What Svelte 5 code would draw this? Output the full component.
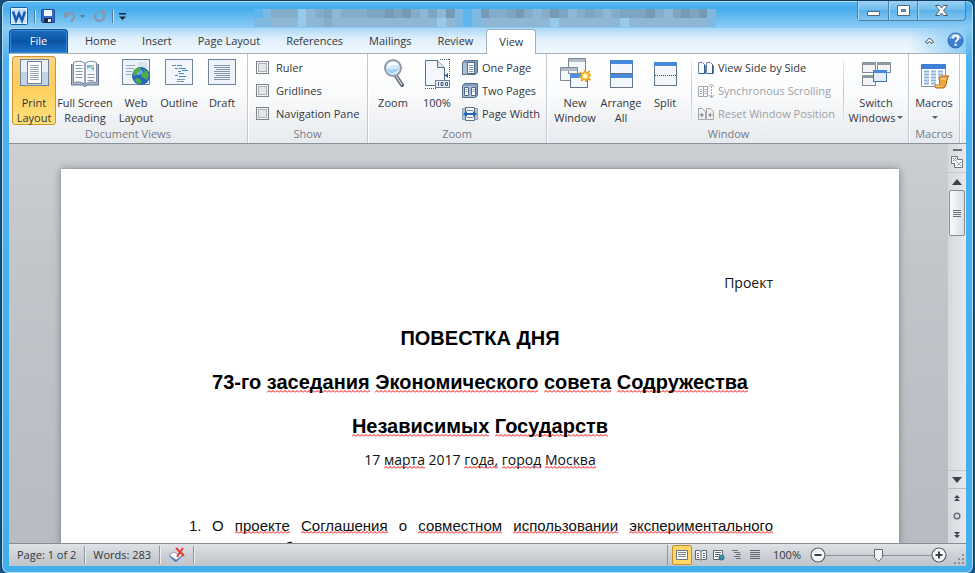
<script>
  const tabs = ['Home', 'Insert', 'Page Layout', 'References', 'Mailings', 'Review', 'View'];
  const palette = { a: '#5fb6ec', b: '#80b9df', c: '#83adc9', d: '#97c9ea', e: '#8db7d4', f: '#769ab4', g: '#7ca5c1' };
  const mosaic = [
    'abcccdecgecccggfgfcegefbabfccgfcecfgecgcecgggfcegfgfb',
    'bbeeedeeceeeeeeeeeeeedebabeeeeeeeedeeeeeeedeeeeeeeeeb'
  ];
  let activeTab = $state('View');
  let zoom = $state(100);
  let show = $state({ Ruler: false, Gridlines: false, 'Navigation Pane': false });
</script>

{#snippet icon(name)}
  {#if name === 'print'}
    <svg width="32" height="32" viewBox="0 0 32 32" shape-rendering="crispEdges">
      <rect x="2.500" y="2.500" width="28" height="26" fill="#e8eff6" stroke="#71839b" />
      <path d="M3 15h27v13H3z" fill="#c3d3e4" />
      <rect x="9.500" y="4.500" width="14" height="22" fill="#fff" stroke="#6d7f97" />
      <path d="M12 8.500h9M12 10.500h9M12 12.500h9M12 14.500h9M12 16.500h9M12 18.500h9M12 20.500h9M12 22.500h9" stroke="#9aa9bb" />
    </svg>
  {:else if name === 'read'}
    <svg width="32" height="32" viewBox="0 0 32 32">
      <path d="M2.500 7v21h11l2.500 1.500 2.500-1.500h11V7" fill="#a9b8ca" stroke="#62738b" />
      <path d="M4.500 5.500Q11 2.500 16 6.500V27Q11 23.500 4.500 25.500zM27.500 5.500Q21 2.500 16 6.500V27Q21 23.500 27.500 25.500z" fill="#f9fbfd" stroke="#7888a0" />
      <path d="M6.500 8.500h7M6.500 11.500h7M6.500 14.500h7M6.500 17.500h7M6.500 20.500h7M18.500 17.500h7M18.500 20.500h7M18.500 23.500h6" stroke="#8796aa" />
      <path d="M18 8h7v7h-7z" fill="#6bb2ea" /><path d="M18 15v-3l3-2 4 4v1z" fill="#e6f2fb" /><circle cx="23.500" cy="9.500" r="1.200" fill="#ffd566" />
    </svg>
  {:else if name === 'web'}
    <svg width="32" height="32" viewBox="0 0 32 32">
      <rect x="2.500" y="2.500" width="27" height="25" fill="#edf3fa" stroke="#71839b" />
      <path d="M6 8.500h9M6 11.500h8M6 14.500h6M6 17.500h5M18 8.500h5" stroke="#93a9c0" /><path d="M18 5h9v6h-9z" fill="#d7e3ef" />
      <circle cx="21" cy="19" r="9" fill="#2768b6" /><ellipse cx="18" cy="15" rx="5" ry="3" fill="#8dc5ee" opacity=".7" />
      <path d="M14 13q4-4 7-2l-1 3-3 1-1 4-3-1zM23 12l4 2 2 4-2 5-3-2-3-1 1-4 3-1zM16 21l4 1 2 3-3 2-4-3z" fill="#4cae45" />
    </svg>
  {:else if name === 'outline'}
    <svg width="32" height="32" viewBox="0 0 32 32" shape-rendering="crispEdges">
      <rect x="2.500" y="2.500" width="27" height="25" fill="#f2f6fb" stroke="#71839b" />
      <path d="M9 8.500h4M12 11.500h3M15 14.500h3M12 18.500h3" stroke="#71839b" />
      <path d="M14 8.500h5M16 11.500h7M19 13.500h6M16 16.500h5M16 19.500h7" stroke="#3c8ad0" />
      <path d="M14 22.500h8M14 24.500h7" stroke="#8296ae" />
    </svg>
  {:else if name === 'draft'}
    <svg width="32" height="32" viewBox="0 0 32 32" shape-rendering="crispEdges">
      <rect x="2.500" y="2.500" width="27" height="25" fill="#edf3f9" stroke="#71839b" />
      <path d="M8 8.500h16M8 10.500h16M10 12.500h14M8 14.500h16M8 16.500h16M10 18.500h14M8 20.500h16M8 22.500h16" stroke="#8496ad" />
    </svg>
  {:else if name === 'zoom'}
    <svg width="32" height="32" viewBox="0 0 32 32">
      <path d="M19 19l6 9" stroke="#555d68" stroke-width="4" stroke-linecap="round" /><path d="M19 19l6 9" stroke="#c5cad0" stroke-width="1.500" />
      <circle cx="16" cy="11" r="8" fill="#d5ebfb" stroke="#929ba7" stroke-width="2" />
      <path d="M10 11q0-6 6-6 4 0 5 3-7-1-11 3z" fill="#fff" /><path d="M10 14q5 5 11-1l1-2q-5 2-12 1z" fill="#a2d0f3" />
    </svg>
  {:else if name === 'hundred'}
    <svg width="32" height="32" viewBox="0 0 32 32">
      <path d="M19 2.500h10M28.500 2v19M4 31.500h11" stroke="#42566f" stroke-dasharray="1 1" />
      <path d="M4.500 3.500h12l7 7v18h-19z" fill="#f4f8fc" stroke="#54708f" /><path d="M16.500 3.500v7h7" fill="#dbe6f1" stroke="#54708f" />
      <path d="M23 18.500h4" stroke="#2d587c" /><path d="M27 16v5l-3-2.500z" fill="#2d587c" />
      <rect x="14.500" y="23.500" width="14" height="7" fill="#edf3f9" stroke="#6a829c" />
      <path d="M17.500 25v4M20 25.500h2v3h-2zM24.500 25.500h2v3h-2z" fill="none" stroke="#40566f" />
    </svg>
  {:else if name === 'newwin'}
    <svg width="32" height="32" viewBox="0 0 32 32">
      <path d="M9.500 1.500h17v15h-17zM1.500 10.500h17v13h-17z" fill="#f4f7fa" stroke="#7b8897" /><path d="M10 2h16v3H10zM2 11h16v3H2z" fill="#b3bcc6" />
      <rect x="11.500" y="17.500" width="17" height="13" fill="#f5f9fd" stroke="#64748a" /><path d="M11 17h18v4H11z" fill="#4e91e0" />
      <path d="M26 13l1.500 3 3-2-1 3.500 3 .5-3 2 2 3-3.500-1-1 3-1.500-3-3 2 .5-3-3-1 3-1.500-2-3 3.500 1z" fill="#ffce40" stroke="#e0971c" /><circle cx="26" cy="19" r="2.200" fill="#fff9cf" />
    </svg>
  {:else if name === 'arrange'}
    <svg width="32" height="32" viewBox="0 0 32 32" shape-rendering="crispEdges">
      <path d="M5.500 3.500h22v13h-22zM5.500 17.500h22v13h-22z" fill="#f3f7fb" stroke="#64748a" /><path d="M5 3h23v4H5zM5 17h23v4H5z" fill="#4789dd" />
    </svg>
  {:else if name === 'split'}
    <svg width="32" height="32" viewBox="0 0 32 32" shape-rendering="crispEdges">
      <rect x="5.500" y="5.500" width="22" height="23" fill="#f3f7fb" stroke="#64748a" /><path d="M5 5h23v4H5z" fill="#4789dd" /><path d="M6 18.500h22" stroke="#37475b" stroke-dasharray="1 1" />
    </svg>
  {:else if name === 'switch'}
    <svg width="32" height="32" viewBox="0 0 32 32" shape-rendering="crispEdges">
      <path d="M2.500 5.500h13v10h-13zM17.500 5.500h13v10h-13zM2.500 18.500h13v10h-13z" fill="#f2f4f7" stroke="#7f8790" /><path d="M2 5h14v3H2zM17 5h14v3H17zM2 18h14v3H2z" fill="#8f979f" />
      <rect x="13.500" y="13.500" width="13" height="11" fill="#e4eefa" stroke="#466fa6" /><path d="M13 13h14v3H13z" fill="#4789dd" />
    </svg>
  {:else if name === 'macros'}
    <svg width="32" height="32" viewBox="0 0 32 32">
      <rect x="3.500" y="7.500" width="24" height="22" fill="#fff" stroke="#8093aa" /><path d="M3 7h25v5H3z" fill="#3f7fd8" />
      <path d="M6 14.500h5M13 14.500h5M20 14.500h5M6 17.500h5M13 17.500h5M20 17.500h5M6 20.500h5M13 20.500h5M20 20.500h4M6 23.500h5M13 23.500h5M6 26.500h5M13 26.500h5" stroke="#91b1dd" stroke-width="2" />
      <path d="M21 21q1-2 3-2h7q-2 2-2 4l-1 5q-1 3-3 3h-7q-2-1-1-3h5z" fill="#eda63c" stroke="#a9671a" /><path d="M23 22h5M17.500 29h6" stroke="#ffe09a" />
    </svg>
  {:else if name === 'onepage' || name === 'twopages'}
    <svg width="16" height="16" viewBox="0 0 16 16">
      <path d="M2.500.500h13v12l-2 2h-13v-12z" fill="#7f9bb9" stroke="#54708e" /><path d="M1 3h12v11H1z" fill="#a9c0d9" />
      {#if name === 'onepage'}<path d="M5.500 2.500h7v11h-7z" fill="#fff" stroke="#506a88" /><path d="M7 5.500h4M7 7.500h4M7 9.500h4M7 11.500h4" stroke="#7f96b0" />
      {:else}<path d="M2.500 4.500h4v8h-4zM9.500 4.500h4v8h-4z" fill="#fff" stroke="#506a88" /><path d="M3.500 6.500h2M3.500 8.500h2M10.500 6.500h2M10.500 8.500h2" stroke="#7f96b0" />{/if}
    </svg>
  {:else if name === 'pagewidth'}
    <svg width="16" height="16" viewBox="0 0 16 16">
      <path d="M.500 2.500h15v11H.500z" fill="#b3c1d0" stroke="#8fa2b7" /><path d="M3.500 1.500h9v13h-9z" fill="#fff" stroke="#5b6f86" />
      <path d="M5 4.500h6M5 11.500h6" stroke="#6c8098" /><path d="M4 8h8" stroke="#1d64bb" stroke-width="2" /><path d="M1 8l4-3v6zM15 8l-4-3v6z" fill="#1d64bb" />
    </svg>
  {:else if name === 'side'}
    <svg width="16" height="16" viewBox="0 0 16 16">
      <path d="M.500 2.500h4l3 3v8h-7zM8.500 2.500h4l3 3v8h-7z" fill="#f6faff" stroke="#6a829e" /><path d="M6.500 5v8.500H1M14.500 5v8.500H9" fill="none" stroke="#315d8b" />
    </svg>
  {:else if name === 'sync'}
    <svg width="16" height="16" viewBox="0 0 16 16" fill="none" stroke="#a4a7ab">
      <path d="M.500 3.500h5v10h-5zM5.500 3.500h4v10h-4M2 6.500h2M2 8.500h2M2 10.500h2M6.500 6.500h2M6.500 8.500h2M6.500 10.500h2" /><path d="M13.500 3v11" stroke-dasharray="2 1" /><path d="M11 4l2.500-3 2.500 3M11 12l2.500 3 2.500-3" />
    </svg>
  {:else if name === 'reset'}
    <svg width="16" height="16" viewBox="0 0 16 16" fill="#eef0f2" stroke="#a4a7ab">
      <path d="M.500 2.500h4l3 3v8h-7zM8.500 2.500h4l3 3v8h-7z" /><path d="M1 9h3M12 9h3" /><path d="M3 6.500L6 9l-3 2.500zM13 6.500L10 9l3 2.500z" fill="#8f9296" stroke="none" />
    </svg>
  {/if}
{/snippet}

{#snippet big(name, lines, cls = '', drop = false)}
  <button class="big {cls}">
    {@render icon(name)}
    {#each lines as line, i}
      <span>{line}{#if drop && i === lines.length - 1}<i class="caret"></i>{/if}</span>
    {/each}
  </button>
{/snippet}

{#snippet small(name, text, disabled = false)}
  <button class="small" {disabled}>{@render icon(name)}<span>{text}</span></button>
{/snippet}

<div class="window">
  <header class="titlebar">
    <div class="quick">
      <svg width="18" height="18" viewBox="0 0 18 18" role="img" aria-label="Word">
        <rect x=".5" y=".5" width="17" height="17" rx="1" fill="#e8f3fc" stroke="#1f5ba3" /><rect x="2" y="2" width="14" height="14" fill="#c4e2f7" />
        <path d="M3 4.500l3 9 3-7 3 7 3-9" fill="none" stroke="#1a5cb0" stroke-width="2.500" />
      </svg>
      <i class="bar"></i>
      <button aria-label="Save">
        <svg width="14" height="14" viewBox="0 0 14 14"><path d="M.500 1.500q0-1 1-1h11q1 0 1 1v12h-12l-1-1z" fill="#3569c4" stroke="#24458f" /><path d="M3 1h8v6H3z" fill="#eef5fd" /><path d="M3 9h8v5H3z" fill="#1e2c4b" /><path d="M7 10h3v3H7z" fill="#e8edf5" /></svg>
      </button>
      <button aria-label="Undo" class="undo">
        <svg width="13" height="13" viewBox="0 0 13 13"><path d="M3 5.500q5-4 7.500-1 2 3-2.500 7.500" fill="none" stroke="#8598ae" stroke-width="2.200" /><path d="M0 1l1 7 6-2z" fill="#8598ae" /></svg>
        <svg width="5" height="3" viewBox="0 0 5 3"><path d="M0 0h5L2.500 3z" fill="#58799c" /></svg>
      </button>
      <button aria-label="Redo">
        <svg width="13" height="13" viewBox="0 0 13 13"><path d="M4 2.500Q0 6 3 9.500q4 3 7.500-.5 2-3 0-5.500" fill="none" stroke="#8598ae" stroke-width="2.200" /><path d="M6 0h6v6z" fill="#8598ae" /></svg>
      </button>
      <i class="bar"></i>
      <button aria-label="Customize Quick Access Toolbar">
        <svg width="7" height="7" viewBox="0 0 7 7"><path d="M0 0h7v1.500H0zM0 3.500h7L3.500 7z" fill="#17283c" /></svg>
      </button>
    </div>
    <div class="mosaic" aria-hidden="true">
      {#each mosaic as row}
        <div>{#each row as c}<i style="background: {palette[c]}"></i>{/each}</div>
      {/each}
    </div>
    <div class="controls">
      <button aria-label="Minimize" class="min"><svg width="13" height="5" viewBox="0 0 13 5"><path d="M.500.500h12v4H.500z" fill="#fff" stroke="#55667c" /></svg></button>
      <button aria-label="Restore" class="max"><svg width="13" height="11" viewBox="0 0 13 11"><path d="M.500.500h12v10H.500zM4.500 4.500v2h4v-2z" fill="#fff" fill-rule="evenodd" stroke="#55667c" /></svg></button>
      <button aria-label="Close" class="close"><svg width="13" height="11" viewBox="0 0 13 11"><path d="M.500.500h4l2 2.500 2-2.500h4L8.500 5.500l4 5h-4l-2-2.500-2 2.500h-4l4-5z" fill="#fff" stroke="#4b5a6e" /></svg></button>
    </div>
  </header>

  <nav class="tabs">
    <button class="file">File</button>
    {#each tabs as t}
      <button class="tab" class:active={activeTab === t} onclick={() => (activeTab = t)}>{t}</button>
    {/each}
    <div class="help">
      <button aria-label="Minimize the Ribbon"><svg width="9" height="7" viewBox="0 0 9 7"><path d="M.500 5L4.500 1l4 4-1.500 1.500-2.500-2-2.500 2z" fill="#fff" stroke="#2f3a48" /></svg></button>
      <button aria-label="Help"><svg width="17" height="17" viewBox="0 0 17 17"><circle cx="8.500" cy="8.500" r="7.500" fill="#3a7fd3" stroke="#2b62ad" /><path d="M2 7q1-5 6.500-5.500Q14 2 15 7q-6-2-13 0z" fill="#7db2ea" /><path d="M5.800 6.500q0-3 2.800-3t2.800 2.500q0 1.500-1.500 2.300-1.200.7-1.200 2" fill="none" stroke="#fff" stroke-width="1.900" /><circle cx="8.600" cy="12.700" r="1.200" fill="#fff" /></svg></button>
    </div>
  </nav>

  <section class="ribbon">
    <div class="group doc-views">
      <div class="items">
        {@render big('print', ['Print', 'Layout'], 'on')}
        {@render big('read', ['Full Screen', 'Reading'], 'wide')}
        {@render big('web', ['Web', 'Layout'])}
        {@render big('outline', ['Outline'], 'slim')}
        {@render big('draft', ['Draft'])}
      </div>
      <h2>Document Views</h2>
    </div>
    <div class="group show">
      <div class="items">
        <div class="col">
          {#each Object.keys(show) as name}
            <label class="check"><input type="checkbox" bind:checked={show[name]} /><span>{name}</span></label>
          {/each}
        </div>
      </div>
      <h2>Show</h2>
    </div>
    <div class="group zooming">
      <div class="items">
        {@render big('zoom', ['Zoom'])}
        {@render big('hundred', ['100%'])}
        <div class="col">
          {@render small('onepage', 'One Page')}
          {@render small('twopages', 'Two Pages')}
          {@render small('pagewidth', 'Page Width')}
        </div>
      </div>
      <h2>Zoom</h2>
    </div>
    <div class="group windows">
      <div class="items">
        {@render big('newwin', ['New', 'Window'], 'mid')}
        {@render big('arrange', ['Arrange', 'All'], 'mid')}
        {@render big('split', ['Split'], 'slim')}
        <i class="rule"></i>
        <div class="col">
          {@render small('side', 'View Side by Side')}
          {@render small('sync', 'Synchronous Scrolling', true)}
          {@render small('reset', 'Reset Window Position', true)}
        </div>
        <i class="rule last"></i>
        {@render big('switch', ['Switch', 'Windows'], 'wide', true)}
      </div>
      <h2>Window</h2>
    </div>
    <div class="group">
      <div class="items">{@render big('macros', ['Macros', ''], '', true)}</div>
      <h2>Macros</h2>
    </div>
  </section>

  <div class="workspace">
    <main class="canvas">
      <article class="page">
        <p class="draft-mark">Проект</p>
        <h1>ПОВЕСТКА ДНЯ<br />73-го <u>заседания</u> <u>Экономического</u> <u>совета</u> <u>Содружества</u><br /><u>Независимых</u> <u>Государств</u></h1>
        <p class="date">17 <u>марта</u> 2017 <u>года,</u> <u>город</u> <u>Москва</u></p>
        <ol>
          <li>
            <span class="num">1.</span>
            <div>
              <p>О <u>проекте</u> <u>Соглашения</u> о <u>совместном</u> <u>использовании</u> <u>экспериментального</u></p>
              <p class="rest">оборудования</p>
            </div>
          </li>
        </ol>
      </article>
    </main>
    <aside class="scroll">
      <i class="splitter"></i>
      <button aria-label="View Ruler" class="ruler"><svg width="12" height="12" viewBox="0 0 12 12"><path d="M.500.500h6v3h5v8h-8v-4h-3z" fill="#f6f7f9" stroke="#70757c" /><path d="M2 2l8 8M5 2L2 5M10 6l-4 4" stroke="#70757c" stroke-dasharray="2 1" /></svg></button>
      <button aria-label="Scroll up" class="arrow"><svg width="10" height="6" viewBox="0 0 10 6"><path d="M0 6h10L5 0z" fill="#3d4249" /></svg></button>
      <div class="track"><button aria-label="Scroll position" class="thumb"><i></i><i></i><i></i><i></i></button></div>
      <button aria-label="Scroll down" class="arrow"><svg width="10" height="6" viewBox="0 0 10 6"><path d="M0 0h10L5 6z" fill="#3d4249" /></svg></button>
      <div class="browse">
        <button aria-label="Previous Page"><svg width="6" height="7" viewBox="0 0 6 7"><path d="M3 0l3 3H0zM3 3l3 3H0z" fill="#3d4249" /></svg></button>
        <button aria-label="Select Browse Object"><svg width="8" height="8" viewBox="0 0 8 8"><circle cx="4" cy="4" r="2.800" fill="none" stroke="#6a7078" stroke-width="1.500" /></svg></button>
        <button aria-label="Next Page"><svg width="6" height="7" viewBox="0 0 6 7"><path d="M0 1h6L3 4zM0 4h6L3 7z" fill="#3d4249" /></svg></button>
      </div>
    </aside>
  </div>

  <footer class="status">
    <button class="cell">Page: 1 of 2</button>
    <button class="cell">Words: 283</button>
    <button class="cell" aria-label="Proofing errors">
      <svg width="17" height="16" viewBox="0 0 17 16"><path d="M1 9l6-3 2 2 4-3 3 3-8 7-2-1z" fill="#3f7fc6" /><path d="M1 8l5-3 3 2 4-2 3 2-8 6z" fill="#fff" stroke="#8b9db3" /><path d="M8 1l8 8M15 1L9 10" stroke="#ea3b2e" stroke-width="2" /></svg>
    </button>
    <div class="views">
      <button aria-label="Print Layout" class="on"><svg width="12" height="12" viewBox="0 0 12 12"><path d="M.500 1.500h11v9H.500z" fill="#fff" stroke="#6b7683" /><path d="M2 3.500h8M2 5.500h8M2 7.500h8" stroke="#7d8794" /></svg></button>
      <button aria-label="Full Screen Reading"><svg width="12" height="12" viewBox="0 0 12 12"><path d="M.500 1.500h4l1.500 1 1.500-1h4v9h-4L6 11l-1.500-.5h-4zM6 2v9" fill="#f5f6f8" stroke="#5f6770" /><path d="M2 4.500h2M2 6.500h2M2 8.500h2M8 4.500h2M8 6.500h2M8 8.500h2" stroke="#5f6770" /></svg></button>
      <button aria-label="Web Layout"><svg width="12" height="12" viewBox="0 0 12 12"><path d="M.500 1.500h9v9h-9z" fill="#fff" stroke="#5f6770" /><path d="M2 3.500h6M2 5.500h5M2 7.500h3" stroke="#5f6770" /><circle cx="8.500" cy="8.500" r="3" fill="#2f74b8" /><path d="M7 8l2-2 1 2-1 2z" fill="#4fae4b" /></svg></button>
      <button aria-label="Outline"><svg width="12" height="12" viewBox="0 0 12 12"><path d="M1 1.500h6M3 3.500h6M5 5.500h5M3 7.500h6M5 9.500h5" stroke="#6b7178" /></svg></button>
      <button aria-label="Draft"><svg width="12" height="12" viewBox="0 0 12 12"><path d="M1 1.500h10M1 3.500h10M1 5.500h10M1 7.500h10M1 9.500h10" stroke="#5f6770" /></svg></button>
    </div>
    <button class="percent">{zoom}%</button>
    <button aria-label="Zoom out" class="round" onclick={() => (zoom = Math.max(10, zoom - 10))}><svg width="16" height="16" viewBox="0 0 16 16"><circle cx="8" cy="8" r="7" fill="#f5f6f8" stroke="#5b626b" stroke-width="1.200" /><path d="M4.500 8h7" stroke="#3c4249" stroke-width="2" /></svg></button>
    <input type="range" min="10" max="190" bind:value={zoom} aria-label="Zoom level" />
    <button aria-label="Zoom in" class="round" onclick={() => (zoom = Math.min(190, zoom + 10))}><svg width="16" height="16" viewBox="0 0 16 16"><circle cx="8" cy="8" r="7" fill="#f5f6f8" stroke="#5b626b" stroke-width="1.200" /><path d="M4.500 8h7M8 4.500v7" stroke="#3c4249" stroke-width="2" /></svg></button>
    <svg class="grip" width="12" height="12" viewBox="0 0 12 12"><path d="M8 0h2v2H8zM4 4h2v2H4zM8 4h2v2H8zM0 8h2v2H0zM4 8h2v2H4zM8 8h2v2H8z" fill="#8c939b" /></svg>
  </footer>
</div>

<style>
  :global(body) { margin: 0; background: linear-gradient(90deg, #174f7c, #1b7199 50%, #14567f); }
  * { box-sizing: border-box; }
  button { border: 0; padding: 0; background: none; font: inherit; color: inherit; }
  svg, i { display: block; flex: none; }
  .window {
    height: 100vh; display: flex; flex-direction: column; margin: 0 1px; padding: 0 7px 7px;
    border: 1px solid #123c61; border-bottom: 0; border-radius: 7px;
    background: linear-gradient(#5cb9f2, #46adec 8px, #8acbf5 26px, #4db2ef 60px, #42aeec);
    box-shadow: inset 0 0 0 1px #b9dff5;
    font: 11px/14px "Open Sans", "Noto Sans", sans-serif; color: #33373d;
  }
  .titlebar { flex: none; height: 27px; display: flex; }
  .quick { display: flex; align-items: center; gap: 8px; padding: 3px 0 0 1px; }
  .quick .bar { width: 1px; height: 13px; margin: 0 -2px; background: #54799b; box-shadow: 1px 0 #c6e4f7; }
  .undo { display: flex; align-items: center; gap: 4px; }
  .mosaic { flex: 1; margin: 8px 141px 0 128px; }
  .mosaic div { display: flex; }
  .mosaic i { flex: 1; height: 9px; }
  .controls { display: flex; height: 20px; border: 1px solid #4d7ea6; border-top: 0; border-radius: 0 0 4px 4px; background: linear-gradient(#9bd0f2, #6bbbec 50%, #5bb1e8 50%, #84c8f2); }
  .controls button { display: flex; align-items: center; justify-content: center; box-shadow: inset 1px 0 #a9d8f5; }
  .controls button + button { border-left: 1px solid #4d7ea6; }
  .min { width: 30px; padding-top: 6px; }
  .max { width: 29px; }
  .close { width: 48px; }

  .tabs { flex: none; height: 26px; display: flex; align-items: stretch; background: linear-gradient(90deg, #b2dcf6, transparent 6%, transparent 94%, #8cccf4), linear-gradient(#a9d7f6, #dceefb 40%, #f4f9fd); border-bottom: 1px solid #a5afba; }
  .tabs .tab, .file { padding-bottom: 1px; }
  .file { width: 59px; margin: 1px 4px 0 0; color: #fff; border: 1px solid #0d4c94; border-bottom: 0; border-radius: 4px 4px 0 0; background: linear-gradient(#1b6dc0, #0b54a4 50%, #1c78cf); box-shadow: inset 0 0 0 1px #3a8ad6; }
  .tab { margin-top: 1px; padding: 0 12px; border: 1px solid transparent; border-bottom: 0; }
  .tab.active { margin-bottom: -1px; border-color: #a5afba; border-radius: 4px 4px 0 0; background: #fff; }
  .help { margin-left: auto; display: flex; align-items: center; gap: 13px; padding-right: 2px; }

  .ribbon { flex: none; display: flex; background: linear-gradient(#fff, #fbfcfd 40%, #e7eaee); border-bottom: 1px solid #8b9199; }
  .group { display: flex; flex-direction: column; padding: 2px 3px; border-right: 1px solid #c3c8ce; box-shadow: 1px 0 #fff; }
  .doc-views { width: 239px; }
  .show { width: 120px; }
  .zooming { width: 179px; }
  .windows { width: 362px; padding-left: 5px; }
  .items { display: flex; height: 69px; }
  h2 { margin: 2px 0 0; font: inherit; line-height: 14px; text-align: center; color: #757b84; }
  .big { width: 44px; display: flex; flex-direction: column; align-items: center; border: 1px solid transparent; border-radius: 3px; white-space: nowrap; }
  .big.slim { width: 42px; }
  .big.mid { width: 46px; }
  .big.wide { width: 58px; }
  .big svg { margin-bottom: 6px; }
  .big span { display: flex; align-items: center; min-height: 15px; line-height: 15px; }
  .big.on { border-color: #c99735; background: linear-gradient(#fbd483, #fdcd5c 40%, #ffe07a); }
  .caret { margin-left: 2px; border: solid transparent; border-width: 3px 3px 0; border-top-color: #5b6067; }
  .col { display: flex; flex-direction: column; padding: 0 3px; }
  .small, .check { display: flex; align-items: center; gap: 4px; height: 23px; white-space: nowrap; }
  .small:disabled { color: #9da0a5; }
  .check { gap: 7px; padding-left: 2px; }
  .check input { appearance: none; width: 13px; height: 13px; margin: 0; border: 1px solid #7d8288; background: #e6e7ea; box-shadow: inset 0 0 0 1px #f4f5f6, inset 0 0 0 2px #abb0b6; }
  .check input:checked { background: #4a76b4; }
  .rule { width: 1px; margin: 4px 3px 2px 5px; background: linear-gradient(#e8eaed, #bfc4ca, #e8eaed); }
  .rule.last { margin-left: auto; }

  .workspace { flex: 1; min-height: 0; display: flex; background: linear-gradient(#cbcfd3, #c2c6cb 30%, #b7bcc2); }
  .canvas { flex: 1; overflow: hidden; padding: 25px 49px 0 52px; }
  .page { min-height: 600px; padding: 104px 126px 0; background: #fff; color: #111; box-shadow: 0 0 1px #7f858c, 0 0 8px #7f858c; font: 14px/20px "Open Sans", "Noto Sans", sans-serif; }
  .page p { margin: 0; }
  .draft-mark { text-align: right; }
  h1 { margin: 23px 0 2px; font: bold 20px/44px "Liberation Sans", Arial, sans-serif; text-align: center; color: #000; }
  .date { text-align: center; }
  u { text-decoration: none; background: url("data:image/svg+xml,%3Csvg xmlns='http://www.w3.org/2000/svg' width='4' height='3'%3E%3Cpath d='M0 2.500L2 .5L4 2.500' fill='none' stroke='red'/%3E%3C/svg%3E") repeat-x left bottom; }
  ol { margin: 45px 0 0; padding: 0; list-style: none; font: 15px/22px "Liberation Sans", Arial, sans-serif; }
  li { display: flex; }
  .num { flex: none; width: 25px; padding-left: 2px; }
  li div { flex: 1; text-align-last: justify; }
  .page .rest { padding-left: 64px; text-align-last: left; }

  .scroll { width: 18px; display: flex; flex-direction: column; align-items: center; background: linear-gradient(90deg, #d5d8dd, #e6e8eb); }
  .splitter { width: 9px; height: 2px; margin-top: 5px; background: #6a7078; }
  .ruler { height: 21px; display: flex; align-items: center; }
  .arrow { width: 100%; height: 18px; display: flex; align-items: center; justify-content: center; border-top: 1px solid #c2c6cb; }
  .track { flex: 1; width: 100%; padding: 0 1px; }
  .thumb { width: 100%; height: 46px; display: flex; flex-direction: column; align-items: center; justify-content: center; gap: 1px; border: 1px solid #858b93; border-radius: 2px; background: linear-gradient(90deg, #fafbfc, #dadde2); }
  .thumb i { width: 8px; height: 1px; background: #6c727a; }
  .browse { width: 100%; display: flex; flex-direction: column; align-items: center; border-top: 1px solid #b9bdc3; }
  .browse button { height: 18px; display: flex; align-items: center; }

  .status { flex: none; height: 23px; display: flex; align-items: center; border-top: 1px solid #858c95; background: linear-gradient(#dfe2e6, #cdd1d6 50%, #bfc4ca); }
  .cell { height: 18px; padding: 0 8px; border-right: 1px solid #8f959d; box-shadow: 1px 0 #eceef0; }
  .views { margin-left: auto; height: 20px; display: flex; padding-left: 4px; border-left: 1px solid #8f959d; }
  .views button { width: 18px; display: flex; align-items: center; justify-content: center; }
  .views .on { width: 20px; border: 1px solid #c3902f; border-radius: 2px; background: #ffd766; }
  .percent { width: 46px; }
  .round { width: 16px; }
  input[type="range"] { appearance: none; width: 105px; height: 16px; margin: 0; background: linear-gradient(#8a9098, #8a9098) center / 100% 1px no-repeat; }
  input[type="range"]::-webkit-slider-thumb { appearance: none; width: 9px; height: 13px; background: url("data:image/svg+xml,%3Csvg xmlns='http://www.w3.org/2000/svg' width='9' height='13'%3E%3Cpath d='M.5 .5h8v8l-4 4l-4-4z' fill='%23f4f5f7' stroke='%23646b74'/%3E%3C/svg%3E"); }
  .grip { align-self: flex-end; margin: 0 0 0 7px; }
</style>
